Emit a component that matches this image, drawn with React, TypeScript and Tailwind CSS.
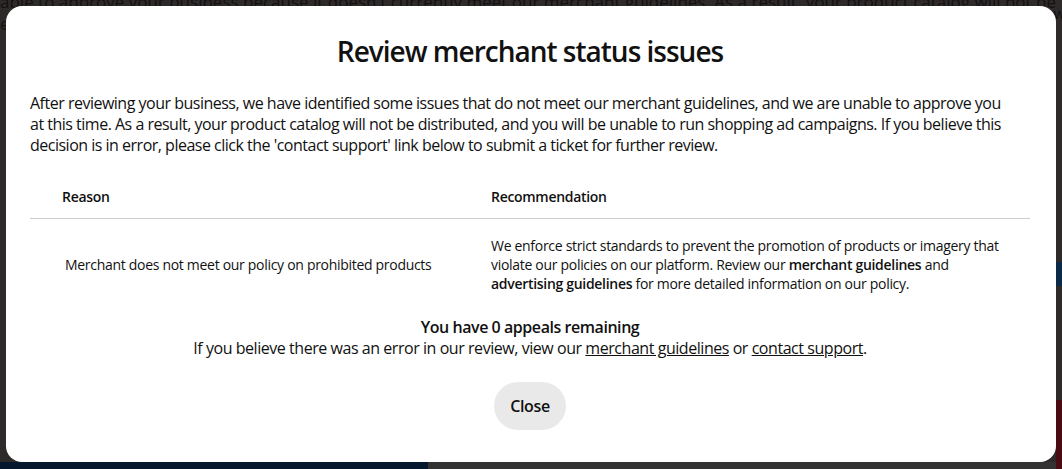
import React from 'react';

const font = { fontFamily: '"Open Sans", "Noto Sans", Arial, sans-serif' };

export default function App() {
  return (
    <div className="relative h-[469px] w-[1062px] overflow-hidden bg-[#2e2a2a]" style={font}>
      {/* Dimmed page behind the modal */}
      <div className="-mt-[9px] text-[17px] leading-[22px] text-[#141111] whitespace-nowrap">
        able to approve your business because it doesn't currently meet our{' '}
        <span className="underline">merchant guidelines</span>. As a result, your product catalog will not be
      </div>
      <div className="text-[17px] leading-[22px] text-[#141111]">e</div>
      <div className="absolute left-0 top-[462px] h-[7px] w-[428px] bg-[#04172c]" />
      <div className="absolute left-[428px] top-[462px] h-[7px] w-[634px] bg-[#333333]" />
      <div className="absolute right-0 top-[262px] h-[24px] w-[6px] bg-[#0b2a48]" />
      <div className="absolute right-0 top-[400px] h-[69px] w-[6px] bg-[#4a0c12]" />
      <div className="absolute left-[1016px] top-[2px] text-[15px] text-[#141111]">Review</div>

      {/* Modal */}
      <div className="absolute left-[6px] top-[6px] flex h-[456px] w-[1050px] flex-col items-center rounded-[16px] bg-white pl-[24px] pr-[26px] text-[#111111]">
        <h1 className="mt-[27px] text-[28px] font-semibold leading-[36px] tracking-[-1px]">
          Review merchant status issues
        </h1>

        <p className="mt-[24px] w-full whitespace-nowrap text-[16px] leading-[21px] tracking-[-0.5px]">
          After reviewing your business, we have identified some issues that do not meet our merchant guidelines, and we are unable to approve you
          <br />
          at this time. As a result, your product catalog will not be distributed, and you will be unable to run shopping ad campaigns. If you believe this
          <br />
          decision is in error, please click the 'contact support' link below to submit a ticket for further review.
        </p>

        <div className="mt-[31px] w-full text-[14px] tracking-[-0.3px]">
          <div className="grid grid-cols-[461px_1fr] border-b border-[#cdcdcd] pb-[11px]">
            <div className="pl-[32px] font-semibold leading-[20px]">Reason</div>
            <div className="font-semibold leading-[20px]">Recommendation</div>
          </div>
          <div className="grid grid-cols-[461px_1fr] pt-[17px]">
            <div className="flex items-center pl-[35px] leading-[19px]">
              Merchant does not meet our policy on prohibited products
            </div>
            <div className="pr-[20px] leading-[19px]">
              We enforce strict standards to prevent the promotion of products or imagery that violate our policies on our platform. Review our{' '}
              <span className="font-semibold">merchant guidelines</span> and{' '}
              <span className="font-semibold">advertising guidelines</span> for more detailed information on our policy.
            </div>
          </div>
        </div>

        <div className="mt-[24px] text-center text-[16px] leading-[21px] tracking-[-0.45px]">
          <div className="font-semibold">You have 0 appeals remaining</div>
          <div>
            If you believe there was an error in our review, view our{' '}
            <a className="underline">merchant guidelines</a> or <a className="underline">contact support</a>.
          </div>
        </div>

        <button className="mt-[23px] flex h-[48px] items-center rounded-full bg-[#e9e9e9] px-[16px] text-[16px] font-semibold tracking-[-0.35px] text-[#111111]">
          Close
        </button>
      </div>
    </div>
  );
}
